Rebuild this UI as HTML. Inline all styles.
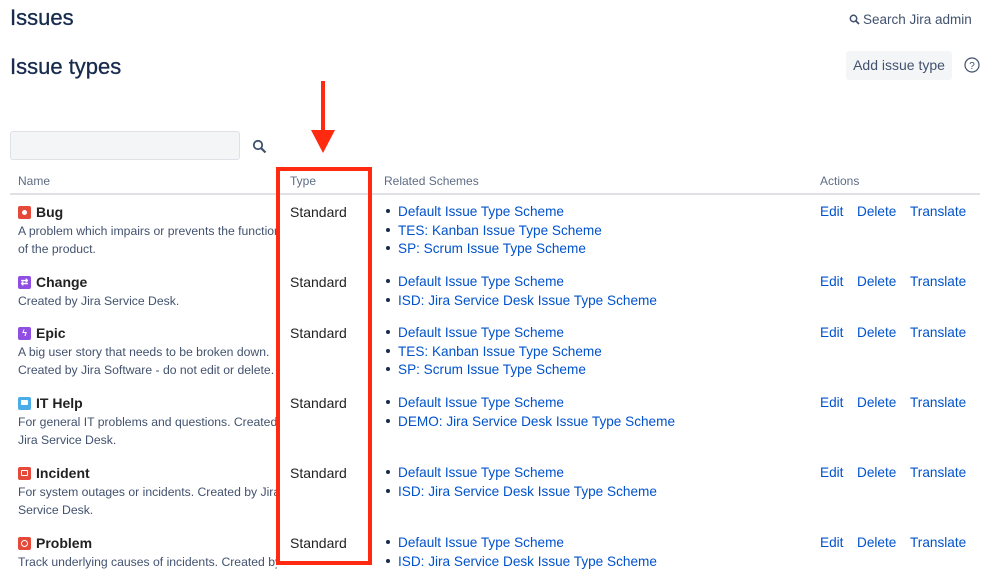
<!DOCTYPE html>
<html><head><meta charset="utf-8"><style>
*{margin:0;padding:0;box-sizing:border-box}
body{width:998px;height:573px;overflow:hidden;background:#fff;font-family:"Liberation Sans",Arial,sans-serif;color:#172b4d;position:relative}
.a{position:absolute;white-space:nowrap}
h1{position:absolute;font-weight:normal;font-size:22px;color:#172b4d;-webkit-text-stroke:0.3px #172b4d}
.row{position:absolute;left:0;width:998px}
.name{position:absolute;left:18px;width:259px;overflow:hidden;top:0}
.title{font-weight:bold;font-size:14px;line-height:18.5px;display:flex;align-items:center;color:#222}
.ico{width:13px;height:13px;border-radius:2px;margin-right:5px;display:inline-block;position:relative}
.desc{font-size:12.2px;line-height:18.5px;color:#42526e;white-space:nowrap}
.type{position:absolute;left:290px;top:0;font-size:14px;line-height:18.5px;color:#222}
.links{position:absolute;left:386px;top:0;font-size:13.6px;line-height:18.5px;color:#0052cc;white-space:nowrap}
.links div:before{content:"";display:inline-block;width:4px;height:4px;border-radius:50%;background:#172b4d;margin-right:8px;vertical-align:middle;position:relative;top:-1px}
.act{position:absolute;top:0;font-size:13.6px;line-height:18.5px;color:#0052cc}
</style></head><body>
<h1 style="left:10px;top:5px">Issues</h1>
<h1 style="left:10px;top:54px">Issue types</h1>
<div class="a" style="left:849px;top:12px;font-size:13.5px;color:#42526e"><svg width="11" height="11" viewBox="0 0 11 11" style="vertical-align:-1px;margin-right:3px"><circle cx="4.5" cy="4.5" r="3.2" fill="none" stroke="#42526e" stroke-width="1.5"/><path d="M7 7L10 10" stroke="#42526e" stroke-width="1.8"/></svg>Search Jira admin</div>
<div class="a" style="left:846px;top:51px;width:106px;height:29px;background:#f4f5f7;border-radius:3px;font-size:14px;line-height:29px;text-align:center;color:#42526e">Add issue type</div>
<svg class="a" style="left:964px;top:57px" width="16" height="16" viewBox="0 0 16 16"><circle cx="8" cy="8" r="7" fill="none" stroke="#42526e" stroke-width="1.2"/><text x="8" y="12" font-size="10" text-anchor="middle" fill="#42526e" font-family="Liberation Sans">?</text></svg>
<div class="a" style="left:10px;top:131px;width:230px;height:29px;background:#f4f5f7;border:1px solid #dfe1e6;border-radius:3px"></div>
<svg class="a" style="left:252px;top:139px" width="15" height="15" viewBox="0 0 15 15"><circle cx="6" cy="6" r="4.2" fill="none" stroke="#42526e" stroke-width="1.8"/><path d="M9 9L13.5 13.5" stroke="#42526e" stroke-width="2.2"/></svg>
<div class="a" style="left:18px;top:174px;font-size:12px;color:#5e6c84">Name</div>
<div class="a" style="left:290px;top:174px;font-size:12px;color:#5e6c84">Type</div>
<div class="a" style="left:384px;top:174px;font-size:12px;color:#5e6c84">Related Schemes</div>
<div class="a" style="left:820px;top:174px;font-size:12px;color:#5e6c84">Actions</div>
<div class="a" style="left:10px;top:193px;width:970px;height:2px;background:#dfe1e6"></div>

<div class="row" style="top:203px">
<div class="name"><div class="title"><span class="ico" style="background:#e5493a"><span style="position:absolute;left:4px;top:4px;width:5px;height:5px;border-radius:50%;background:#fff"></span></span>Bug</div><div class="desc">A problem which impairs or prevents the functions<br>of the product.</div></div>
<div class="type">Standard</div>
<div class="links"><div>Default Issue Type Scheme</div><div>TES: Kanban Issue Type Scheme</div><div>SP: Scrum Issue Type Scheme</div></div>
<div class="act" style="left:820px">Edit</div><div class="act" style="left:857px">Delete</div><div class="act" style="left:910px">Translate</div></div>

<div class="row" style="top:273px">
<div class="name"><div class="title"><span class="ico" style="background:#904ee2;color:#fff;font-size:9px;line-height:13px;text-align:center">⇄</span>Change</div><div class="desc">Created by Jira Service Desk.</div></div>
<div class="type">Standard</div>
<div class="links"><div>Default Issue Type Scheme</div><div>ISD: Jira Service Desk Issue Type Scheme</div></div>
<div class="act" style="left:820px">Edit</div><div class="act" style="left:857px">Delete</div><div class="act" style="left:910px">Translate</div></div>

<div class="row" style="top:324px">
<div class="name"><div class="title"><span class="ico" style="background:#904ee2;color:#fff;font-size:9px;line-height:13px;text-align:center">ϟ</span>Epic</div><div class="desc">A big user story that needs to be broken down.<br>Created by Jira Software - do not edit or delete.</div></div>
<div class="type">Standard</div>
<div class="links"><div>Default Issue Type Scheme</div><div>TES: Kanban Issue Type Scheme</div><div>SP: Scrum Issue Type Scheme</div></div>
<div class="act" style="left:820px">Edit</div><div class="act" style="left:857px">Delete</div><div class="act" style="left:910px">Translate</div></div>

<div class="row" style="top:394px">
<div class="name"><div class="title"><span class="ico" style="background:#4bade8"><span style="position:absolute;left:3px;top:3px;width:7px;height:5px;background:#fff;border-radius:1px"></span></span>IT Help</div><div class="desc">For general IT problems and questions. Created by<br>Jira Service Desk.</div></div>
<div class="type">Standard</div>
<div class="links"><div>Default Issue Type Scheme</div><div>DEMO: Jira Service Desk Issue Type Scheme</div></div>
<div class="act" style="left:820px">Edit</div><div class="act" style="left:857px">Delete</div><div class="act" style="left:910px">Translate</div></div>

<div class="row" style="top:464px">
<div class="name"><div class="title"><span class="ico" style="background:#e5493a"><span style="position:absolute;left:3px;top:3px;width:7px;height:6px;border:1px solid #fff;border-radius:1px"></span></span>Incident</div><div class="desc">For system outages or incidents. Created by Jira<br>Service Desk.</div></div>
<div class="type">Standard</div>
<div class="links"><div>Default Issue Type Scheme</div><div>ISD: Jira Service Desk Issue Type Scheme</div></div>
<div class="act" style="left:820px">Edit</div><div class="act" style="left:857px">Delete</div><div class="act" style="left:910px">Translate</div></div>

<div class="row" style="top:534px">
<div class="name"><div class="title"><span class="ico" style="background:#e5493a"><span style="position:absolute;left:3px;top:3px;width:7px;height:7px;border:1.3px solid #fff;border-radius:50%"></span></span>Problem</div><div class="desc">Track underlying causes of incidents. Created by</div></div>
<div class="type">Standard</div>
<div class="links"><div>Default Issue Type Scheme</div><div>ISD: Jira Service Desk Issue Type Scheme</div></div>
<div class="act" style="left:820px">Edit</div><div class="act" style="left:857px">Delete</div><div class="act" style="left:910px">Translate</div></div>

<div class="a" style="left:276px;top:167px;width:96px;height:398px;border:4px solid #ff2a10"></div>
<div class="a" style="left:321px;top:81px;width:4px;height:52px;background:#ff2a10"></div>
<svg class="a" style="left:311px;top:130px" width="24" height="24"><path d="M0 0H24L12 23Z" fill="#ff2a10"/></svg>
</body></html>
